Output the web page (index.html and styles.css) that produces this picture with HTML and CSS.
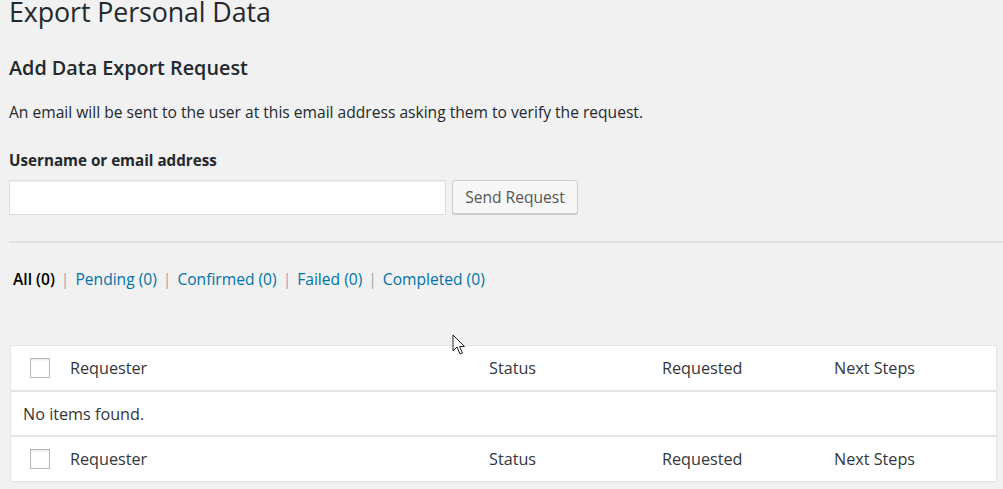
FILE: index.html
```html
<!DOCTYPE html>
<html>
<head>
<meta charset="utf-8">
<link rel="stylesheet" href="styles.css">
</head>
<body>
<div class="wrap">
  <h1 class="title">Export Personal Data</h1>
  <h2 class="subtitle">Add Data Export Request</h2>
  <p class="desc">An email will be sent to the user at this email address asking them to verify the request.</p>
  <label class="label" for="user">Username or email address</label>
  <div class="form-row">
    <input class="text-input" id="user" type="text">
    <button class="btn">Send Request</button>
  </div>
  <hr class="divider">
  <ul class="filters">
    <li class="current">All (0)</li>
    <li class="sep">|</li>
    <li><a href="#">Pending (0)</a></li>
    <li class="sep">|</li>
    <li><a href="#">Confirmed (0)</a></li>
    <li class="sep">|</li>
    <li><a href="#">Failed (0)</a></li>
    <li class="sep">|</li>
    <li><a href="#">Completed (0)</a></li>
  </ul>
  <div class="table">
    <div class="row head">
      <div class="cb"><span class="box"></span></div>
      <div class="col c1">Requester</div>
      <div class="col c2">Status</div>
      <div class="col c3">Requested</div>
      <div class="col c4">Next Steps</div>
    </div>
    <div class="row empty">No items found.</div>
    <div class="row head foot">
      <div class="cb"><span class="box"></span></div>
      <div class="col c1">Requester</div>
      <div class="col c2">Status</div>
      <div class="col c3">Requested</div>
      <div class="col c4">Next Steps</div>
    </div>
  </div>
</div>
<svg class="cursor" width="14" height="22" viewBox="0 0 14 22">
  <path d="M1 1 L1 17 L5 13 L8 20 L10.5 19 L7.5 12.5 L12.5 12.5 Z" fill="#fff" stroke="#222" stroke-width="1" stroke-linejoin="miter"/>
</svg>
</body>
</html>
```
FILE: styles.css
```css
html, body {
  margin: 0;
  padding: 0;
  background: #f1f1f1;
  font-family: "Open Sans", "Liberation Sans", sans-serif;
  color: #23282d;
}
.wrap {
  padding: 0 8px 0 9px;
}
.title {
  margin: 0;
  font-size: 26.8px;
  font-weight: 400;
  line-height: 24px;
  letter-spacing: -0.1px;
}
.subtitle {
  margin: 31px 0 0;
  font-size: 19.8px;
  font-weight: 600;
  line-height: 26px;
}
.desc {
  margin: 20px 0 0;
  font-size: 15.6px;
  line-height: 22px;
}
.label {
  display: block;
  margin-top: 26px;
  font-size: 15.2px;
  font-weight: 700;
  line-height: 22px;
}
.form-row {
  display: flex;
  gap: 6px;
  margin-top: 9px;
}
.text-input {
  width: 437px;
  height: 35px;
  box-sizing: border-box;
  border: 1px solid #ddd;
  background: #fff;
  margin: 0;
  box-shadow: inset 0 1px 2px rgba(0,0,0,0.07);
}
.btn {
  width: 126px;
  height: 34px;
  box-sizing: border-box;
  border: 1px solid #ccc;
  border-radius: 3px;
  background: #f7f7f7;
  box-shadow: 0 1px 0 #ccc;
  color: #555;
  font-family: inherit;
  font-size: 15.6px;
  padding: 0;
  margin: 0;
}
.divider {
  border: 0;
  border-top: 2px solid #e2e2e2;
  margin: 26px -8px 0 0;
}
.filters {
  list-style: none;
  margin: 25px 0 0 4px;
  padding: 0;
  display: flex;
  gap: 6px;
  font-size: 15.6px;
  line-height: 22px;
}
.filters a {
  color: #0073aa;
  text-decoration: none;
}
.filters .current {
  color: #000;
  font-weight: 600;
}
.filters .sep {
  color: #a0a5aa;
}
.table {
  margin: 55px 0 0 1px;
  width: 985px;
  background: #fff;
  border: 1px solid #e5e5e5;
  box-shadow: 0 1px 1px rgba(0,0,0,0.04);
}
.row {
  display: flex;
  align-items: center;
  height: 44px;
  font-size: 16.2px;
  color: #32373c;
}
.head {
  border-bottom: 2px solid #e4e4e4;
}
.foot {
  border-bottom: 0;
  border-top: 2px solid #e4e4e4;
}
.empty {
  padding-left: 12px;
  height: 43px;
}
.cb {
  width: 59px;
  display: flex;
  justify-content: flex-end;
}
.box {
  display: block;
  width: 18px;
  height: 18px;
  border: 1px solid #b4b9be;
  background: #fff;
  box-shadow: inset 0 1px 2px rgba(0,0,0,0.1);
  margin-right: 20px;
}
.col {
  flex: none;
}
.c1 { width: 419px; }
.c2 { width: 173px; }
.c3 { width: 172px; }
.c4 { width: 150px; }
.cursor {
  position: absolute;
  left: 452px;
  top: 334px;
}
```
